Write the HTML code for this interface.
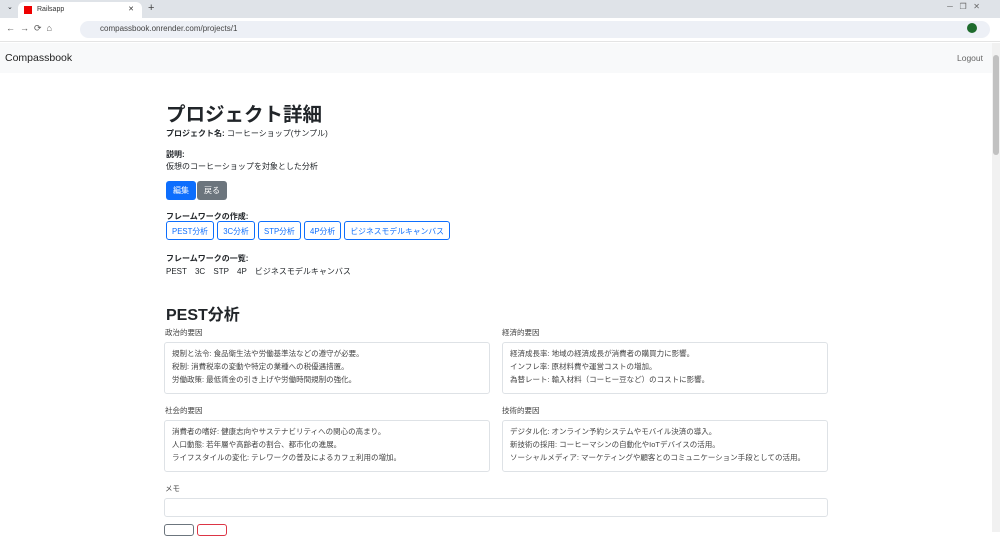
<!DOCTYPE html><html><head><meta charset="utf-8"><style>
*{box-sizing:border-box;margin:0;padding:0}
body{width:1000px;height:532px;overflow:hidden;font-family:"Liberation Sans","Noto Sans CJK JP",sans-serif;color:#212529;background:#fff;position:relative;font-size:8px}
.tabs{position:absolute;top:0;left:0;width:1000px;height:18px;background:#dfe3e8}
.tab{position:absolute;left:18px;top:2px;width:124px;height:16px;background:#fff;border-radius:6px 6px 0 0;font-size:7px;padding:4px 0 0 19px;color:#333}
.tab i{position:absolute;left:6px;top:4px;width:8px;height:8px;background:#e00}
.tool{position:absolute;top:18px;left:0;width:1000px;height:24px;background:#fff;border-bottom:1px solid #e4e4e4}
.addr{position:absolute;left:80px;top:3px;width:910px;height:17px;background:#edf0f6;border-radius:9px;font-size:8px;color:#444;padding:3px 0 0 20px}
.nav{position:absolute;top:43px;left:0;width:992px;height:30px;background:#f8f9fa}
.brand{position:absolute;left:5px;top:9px;font-size:10.5px;color:#222}
.logout{position:absolute;right:9px;top:10px;font-size:8.5px;color:#666}
.sb{position:absolute;right:0;top:43px;width:8px;height:489px;background:#f1f1f1}
.sb i{position:absolute;left:1px;top:12px;width:6px;height:100px;background:#c1c1c1;border-radius:3px}
.c{position:absolute;left:166px;width:664px}
h1{font-size:19.5px;font-weight:bold}
h2{font-size:16px;font-weight:bold}
b{font-weight:bold}
.btn{display:inline-block;height:19px;padding:4px 7px;border-radius:3px;font-size:8px;color:#fff;margin-right:1px}
.ob{display:inline-block;height:19px;padding:4px 5px;border:1px solid #0d6efd;color:#0d6efd;border-radius:3px;font-size:7.8px;margin-right:1px}
.box{position:absolute;width:326px;height:52px;border:1px solid #dee2e6;border-radius:3px;padding:4px 7px;line-height:13px;font-size:7.5px;color:#444}
.lab{position:absolute;font-size:7.5px;color:#444}
</style></head><body>
<div class="tabs"><div class="tab"><i></i>Railsapp<span style="position:absolute;right:8px;top:3px">✕</span></div><span style="position:absolute;left:148px;top:2px;font-size:11px;color:#444">+</span><span style="position:absolute;left:7px;top:3px;font-size:7px">⌄</span><span style="position:absolute;right:20px;top:2px;font-size:8px;color:#666">─ &nbsp; ❐ &nbsp; ✕</span></div>
<div class="tool"><span style="position:absolute;left:6px;top:5px;font-size:9px;color:#555">← &nbsp;→ &nbsp;⟳ &nbsp;⌂</span><div class="addr">compassbook.onrender.com/projects/1</div><span style="position:absolute;left:967px;top:5px;width:10px;height:10px;border-radius:50%;background:#1e6b2d"></span></div>
<div class="nav"><div class="brand">Compassbook</div><div class="logout">Logout</div></div>
<div class="sb"><i></i></div>
<div class="c" style="top:98px"><h1>プロジェクト詳細</h1></div>
<div class="c" style="top:128px"><b>プロジェクト名:</b> コーヒーショップ(サンプル)</div>
<div class="c" style="top:149px"><b>説明:</b></div>
<div class="c" style="top:161px">仮想のコーヒーショップを対象とした分析</div>
<div class="c" style="top:181px"><span class="btn" style="background:#0d6efd">編集</span><span class="btn" style="background:#6c757d">戻る</span></div>
<div class="c" style="top:211px"><b>フレームワークの作成:</b></div>
<div class="c" style="top:221px"><span class="ob">PEST分析</span> <span class="ob">3C分析</span> <span class="ob">STP分析</span> <span class="ob">4P分析</span> <span class="ob">ビジネスモデルキャンバス</span></div>
<div class="c" style="top:253px"><b>フレームワークの一覧:</b></div>
<div class="c" style="top:266px;word-spacing:6px">PEST 3C STP 4P ビジネスモデルキャンバス</div>
<div class="c" style="top:301px"><h2>PEST分析</h2></div>
<div class="lab" style="left:165px;top:327px">政治的要因</div>
<div class="lab" style="left:502px;top:327px">経済的要因</div>
<div class="box" style="left:164px;top:342px">規制と法令: 食品衛生法や労働基準法などの遵守が必要。<br>税制: 消費税率の変動や特定の業種への税優遇措置。<br>労働政策: 最低賃金の引き上げや労働時間規制の強化。</div>
<div class="box" style="left:502px;top:342px">経済成長率: 地域の経済成長が消費者の購買力に影響。<br>インフレ率: 原材料費や運営コストの増加。<br>為替レート: 輸入材料（コーヒー豆など）のコストに影響。</div>
<div class="lab" style="left:165px;top:405px">社会的要因</div>
<div class="lab" style="left:502px;top:405px">技術的要因</div>
<div class="box" style="left:164px;top:420px">消費者の嗜好: 健康志向やサステナビリティへの関心の高まり。<br>人口動態: 若年層や高齢者の割合、都市化の進展。<br>ライフスタイルの変化: テレワークの普及によるカフェ利用の増加。</div>
<div class="box" style="left:502px;top:420px">デジタル化: オンライン予約システムやモバイル決済の導入。<br>新技術の採用: コーヒーマシンの自動化やIoTデバイスの活用。<br>ソーシャルメディア: マーケティングや顧客とのコミュニケーション手段としての活用。</div>
<div class="lab" style="left:165px;top:483px">メモ</div>
<div class="box" style="left:164px;top:498px;width:664px;height:19px"></div>
<div style="position:absolute;left:164px;top:524px;width:30px;height:12px;border:1px solid #6c757d;border-radius:3px"></div>
<div style="position:absolute;left:197px;top:524px;width:30px;height:12px;border:1px solid #dc3545;border-radius:3px"></div>
</body></html>
